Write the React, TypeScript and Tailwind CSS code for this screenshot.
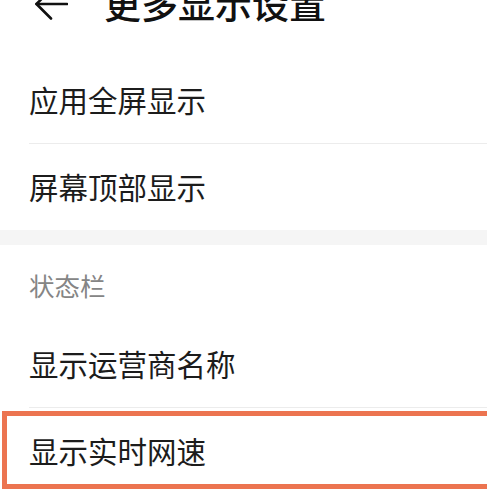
const FONT = { fontFamily: '"Noto Sans CJK SC", "Noto Sans", sans-serif' };

function Row({ label, divider }: { label: string; divider?: boolean }) {
  return (
    <div className="relative">
      <div className="flex h-[86px] items-center pb-[2px] pl-[29px] text-[29.5px] text-[#1c1c1c]">
        {label}
      </div>
      {divider && <div className="ml-[29px] h-px bg-[#ececec]" />}
    </div>
  );
}

export default function App() {
  return (
    <div className="h-[496px] w-[487px] overflow-hidden bg-white" style={FONT}>
      {/* header, scrolled partly out of view */}
      <div className="-mt-[49px] flex h-[106px] items-center">
        <svg
          className="ml-[34px] h-[40px] w-[34px]"
          viewBox="0 0 34 40"
          fill="none"
          stroke="#111"
          strokeWidth="2.6"
          strokeLinecap="round"
          strokeLinejoin="round"
        >
          <path d="M2.5 20H33" />
          <path d="M17 5.5L2.5 20L17 34.5" />
        </svg>
        <span className="ml-[36px] text-[37px] font-medium text-[#111]">更多显示设置</span>
      </div>

      <Row label="应用全屏显示" divider />
      <Row label="屏幕顶部显示" />

      <div className="h-[15px] bg-[#f5f5f5]" />

      <div className="flex h-[76px] items-end pb-[17px] pl-[29px] text-[25.5px] text-[#858585]">
        状态栏
      </div>

      <Row label="显示运营商名称" divider />

      <div className="relative">
        <div className="flex h-[86px] items-center pb-[2px] pl-[29px] text-[29.5px] text-[#1c1c1c]">
          显示实时网速
        </div>
        <div className="absolute -right-[20px] left-[2px] top-[3px] h-[78px] border-[5px] border-[#ec7450]" />
      </div>
    </div>
  );
}
